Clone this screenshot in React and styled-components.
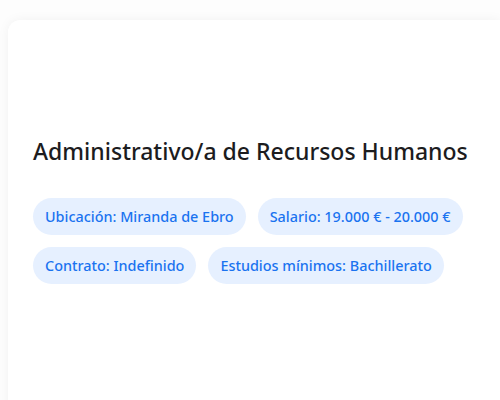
import React from 'react';
import styled, { createGlobalStyle } from 'styled-components';

const GlobalStyle = createGlobalStyle`
    html, body {
        margin: 0;
        background: #fdfdfd;
        font-family: "Noto Sans", "Open Sans", sans-serif;
    }
`;

const Page = styled.div`
    padding: 20px 0 0 8px;
    height: 400px;
    box-sizing: border-box;
    overflow: hidden;
`;

const Card = styled.div`
    background: #fff;
    border-radius: 12px 0 0 0;
    box-shadow: 0 0 12px rgba(0, 0, 0, 0.05);
    padding: 118px 25px 120px;
    min-height: 400px;
`;

const Title = styled.h2`
    margin: 0 0 32px;
    font-size: 23px;
    font-weight: 500;
    line-height: 1.2;
    color: #1c1c1e;
`;

const Tags = styled.div`
    display: flex;
    flex-wrap: wrap;
    gap: 12px;
    max-width: 440px;
`;

const Tag = styled.span`
    display: inline-flex;
    align-items: center;
    height: 37px;
    padding: 0 12px;
    border-radius: 19px;
    background: #e6f0ff;
    color: #1a73f0;
    font-size: 14.4px;
    font-weight: 500;
`;

const tags = [
    'Ubicación: Miranda de Ebro',
    'Salario: 19.000 € - 20.000 €',
    'Contrato: Indefinido',
    'Estudios mínimos: Bachillerato',
];

const App = () => (
    <>
        <GlobalStyle />
        <Page>
            <Card>
                <Title>Administrativo/a de Recursos Humanos</Title>
                <Tags>
                    { tags.map((t) => <Tag key={ t }>{ t }</Tag>) }
                </Tags>
            </Card>
        </Page>
    </>
);

export default App;
